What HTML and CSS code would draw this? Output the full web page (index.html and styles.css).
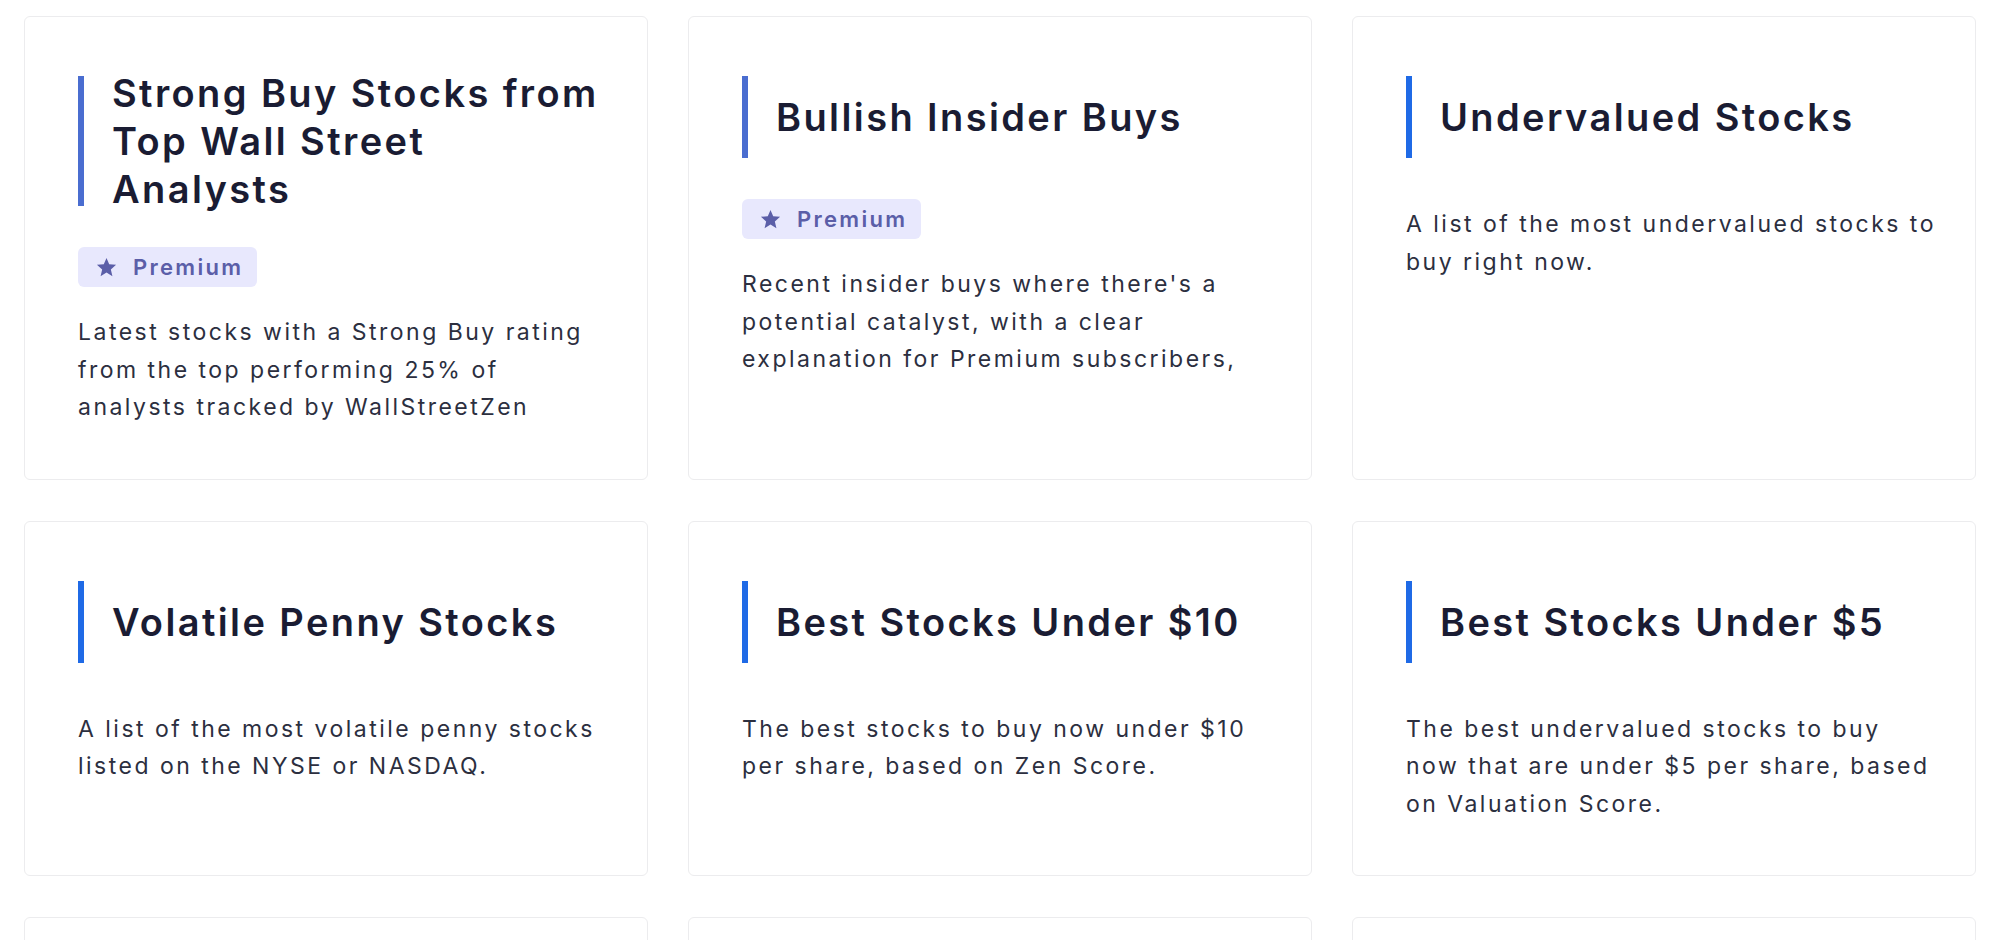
FILE: index.html
```html
<!DOCTYPE html>
<html lang="en">
<head>
<meta charset="utf-8">
<title>Stock Ideas</title>
<link rel="stylesheet" href="styles.css">
</head>
<body>
<main class="grid">
  <article class="card">
    <div class="title title--muted"><h2>Strong Buy Stocks from Top Wall Street Analysts</h2></div>
    <span class="badge"><svg class="star" viewBox="0 0 24 24"><path d="M12 17.27L18.18 21l-1.64-7.03L22 9.24l-7.19-.61L12 2 9.19 8.63 2 9.24l5.46 4.73L5.82 21z"/></svg>Premium</span>
    <p class="desc">Latest stocks with a Strong Buy rating from the top performing 25% of analysts tracked by WallStreetZen</p>
  </article>
  <article class="card">
    <div class="title title--muted"><h2>Bullish Insider Buys</h2></div>
    <span class="badge"><svg class="star" viewBox="0 0 24 24"><path d="M12 17.27L18.18 21l-1.64-7.03L22 9.24l-7.19-.61L12 2 9.19 8.63 2 9.24l5.46 4.73L5.82 21z"/></svg>Premium</span>
    <p class="desc">Recent insider buys where there's a potential catalyst, with a clear explanation for Premium subscribers,</p>
  </article>
  <article class="card">
    <div class="title"><h2>Undervalued Stocks</h2></div>
    <p class="desc">A list of the most undervalued stocks to buy right now.</p>
  </article>
  <article class="card">
    <div class="title"><h2>Volatile Penny Stocks</h2></div>
    <p class="desc">A list of the most volatile penny stocks listed on the NYSE or NASDAQ.</p>
  </article>
  <article class="card">
    <div class="title"><h2>Best Stocks Under $10</h2></div>
    <p class="desc">The best stocks to buy now under $10 per share, based on Zen Score.</p>
  </article>
  <article class="card">
    <div class="title"><h2>Best Stocks Under $5</h2></div>
    <p class="desc">The best undervalued stocks to buy now that are under $5 per share, based on Valuation Score.</p>
  </article>
  <article class="card">
    <div class="title"><h2>Top Dividend Stocks</h2></div>
    <p class="desc">The best dividend stocks to buy now, based on Zen Score.</p>
  </article>
  <article class="card">
    <div class="title"><h2>Top Growth Stocks</h2></div>
    <p class="desc">The fastest growing stocks to buy now.</p>
  </article>
  <article class="card">
    <div class="title"><h2>Top Rated Stocks</h2></div>
    <p class="desc">The highest rated stocks by Zen Score.</p>
  </article>
</main>
</body>
</html>
```
FILE: styles.css
```css
html, body {
  margin: 0;
  padding: 0;
  background: #ffffff;
}

body {
  font-family: "Inter", "Noto Sans", sans-serif;
  color: #2c2f3f;
}

.grid {
  display: grid;
  grid-template-columns: repeat(3, 1fr);
  column-gap: 40px;
  row-gap: 41px;
  padding: 16px 24px 40px 24px;
}

.card {
  border: 1px solid #ececee;
  border-radius: 6px;
  padding: 59px 38px 52px 53px;
  background: #ffffff;
  display: flex;
  flex-direction: column;
  align-items: flex-start;
}

.title {
  display: flex;
  align-items: center;
  min-height: 82px;
  border-left: 6px solid #1f6ae6;
  padding-left: 28px;
  margin-bottom: 41px;
  align-self: stretch;
}

.title--muted {
  border-left-color: #4a6dd0;
}

.title h2 {
  margin: -7px 0;
  font-size: 38px;
  line-height: 48px;
  font-weight: 600;
  letter-spacing: 2.4px;
  color: #1a1c33;
}

.badge {
  display: inline-flex;
  align-items: center;
  gap: 15px;
  height: 40px;
  padding: 0 14px 0 17px;
  border-radius: 6px;
  background: #e8e8fd;
  color: #5b5ea8;
  font-size: 22px;
  font-weight: 600;
  letter-spacing: 2.3px;
  margin-bottom: 20px;
  box-sizing: border-box;
}

.star {
  width: 23px;
  height: 23px;
  fill: #5b5ea8;
  flex: none;
}

.desc {
  margin: 7px 0 0 0;
  font-size: 23px;
  line-height: 37.5px;
  font-weight: 400;
  letter-spacing: 2.48px;
  color: #2c2f3f;
}
```
